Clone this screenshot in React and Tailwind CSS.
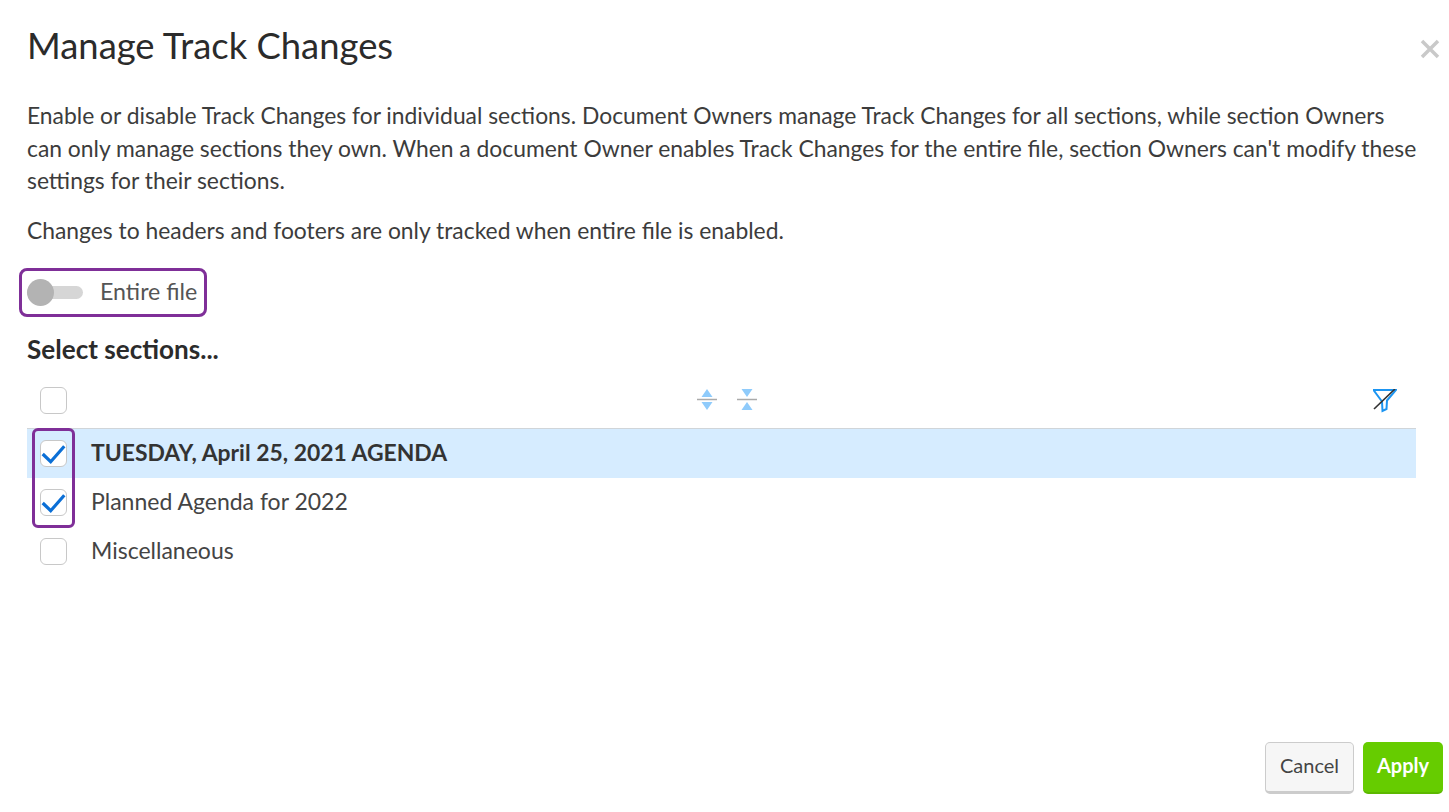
const Checkbox = ({ checked }) => {
    return (
        <div className="relative w-[27px] h-[27px] shrink-0 rounded-[6px] border border-[#c8c8c8] bg-white">
            {checked && (
                <svg className="absolute -left-px -top-px" width="27" height="27" viewBox="0 0 27 27" fill="none">
                    <path d="M2.7 14 L10.7 21.7 L24.3 6.3" stroke="#0b6fd6" strokeWidth="3.2" />
                </svg>
            )}
        </div>
    )
}

const Row = ({ label, checked, active }) => {
    return (
        <div className={"flex items-center h-[49px] pl-[13px] " + (active ? "bg-[#d6ecff] font-bold text-[#333333]" : "text-[#444444]")}>
            <Checkbox checked={checked} />
            <span className={"ml-[24px] pb-[2px] " + (active ? "text-[22.9px]" : "text-[23px]")}>{label}</span>
        </div>
    )
}

const App = () => {
    return (
        <div className="relative w-[1449px] h-[812px] bg-white overflow-hidden text-[#333333] font-['Lato',sans-serif]">
            <div className="pl-[27px] pr-[32px] pt-[21px]">
                <div className="flex items-start justify-between">
                    <h1 className="text-[36.4px] leading-[48px] text-[#2b2b2b]">Manage Track Changes</h1>
                    <svg className="mt-[18px] -mr-[23px]" width="20" height="20" viewBox="0 0 20 20">
                        <path d="M2 2 L18 18 M18 2 L2 18" stroke="#c9c9c9" strokeWidth="3.5" />
                    </svg>
                </div>

                <p className="mt-[30px] text-[22.85px] leading-[32.5px] text-[#3c3c3c] w-[1392px]">
                    Enable or disable Track Changes for individual sections. Document Owners manage Track Changes for all sections, while section Owners can only manage sections they own. When a document Owner enables Track Changes for the entire file, section Owners can't modify these settings for their sections.
                </p>
                <p className="mt-[17px] text-[22.85px] leading-[32.5px] text-[#3c3c3c]">
                    Changes to headers and footers are only tracked when entire file is enabled.
                </p>

                <div className="mt-[22px] -ml-[8px] flex items-center w-[188px] h-[49px] border-[3px] border-[#7f2f98] rounded-[8px]">
                    <div className="relative ml-[5px] w-[56px] h-[13px] rounded-full bg-[#d6d6d6]">
                        <div className="absolute left-0 top-[-7px] w-[27px] h-[27px] rounded-full bg-[#b3b3b3]"></div>
                    </div>
                    <span className="ml-[17px] pb-[2px] text-[23.2px] text-[#555555]">Entire file</span>
                </div>

                <h2 className="mt-[15px] text-[26.1px] leading-[34px] font-bold text-[#2b2b2b]">Select sections...</h2>

                <div className="mt-[11px] flex items-center h-[52px] pb-[4px] pl-[13px] border-b border-[#d0d5d9] w-[1389px]">
                    <Checkbox />
                    <div className="ml-[630px] flex items-center gap-[20px]">
                        <svg width="20" height="24" viewBox="0 0 20 24">
                            <path d="M10 0 L15.5 8 L4.5 8 Z M4.5 13 L15.5 13 L10 21 Z" fill="#8fcbfb" />
                            <path d="M0 10.5 H20" stroke="#aaaaaa" strokeWidth="1.5" />
                        </svg>
                        <svg width="20" height="24" viewBox="0 0 20 24">
                            <path d="M4.5 0 L15.5 0 L10 8 Z M10 13 L15.5 21 L4.5 21 Z" fill="#8fcbfb" />
                            <path d="M0 10.5 H20" stroke="#aaaaaa" strokeWidth="1.5" />
                        </svg>
                    </div>
                    <svg className="ml-[616px]" width="24" height="24" viewBox="0 0 24 24" fill="none">
                        <path d="M0.5 1 H23 L14 11.5 L13.5 20 L9.5 22 L9 12.5 Z" stroke="#1b95f2" strokeWidth="2" />
                        <path d="M1 20 L22 0" stroke="#333333" strokeWidth="1.7" />
                    </svg>
                </div>

                <div className="relative w-[1389px]">
                    <Row label="TUESDAY, April 25, 2021 AGENDA" checked active />
                    <Row label="Planned Agenda for 2022" checked />
                    <Row label="Miscellaneous" />
                    <div className="absolute left-[5px] -top-px w-[43px] h-[100px] border-[3px] border-[#7f2f98] rounded-[6px]"></div>
                </div>
            </div>

            <div className="absolute right-[6px] bottom-[18px] flex items-center gap-[9px]">
                <button className="w-[89px] h-[52px] pb-[5px] rounded-[5px] border border-[#cccccc] border-b-[3px] bg-[#f6f6f6] text-[20px] text-[#444444]">Cancel</button>
                <button className="w-[80px] h-[52px] pb-[5px] rounded-[5px] bg-[#66cc00] border-b-[2px] border-[#5cb800] text-[20px] font-bold text-white">Apply</button>
            </div>
        </div>
    )
}

export default App;
